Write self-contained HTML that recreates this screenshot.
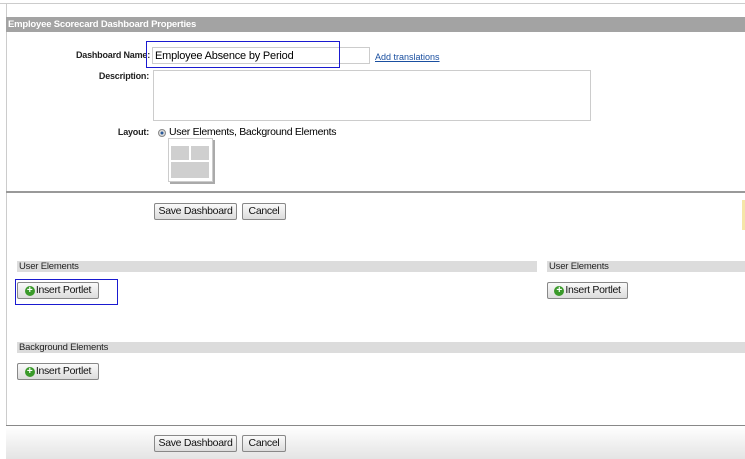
<!DOCTYPE html>
<html><head><style>
*{margin:0;padding:0;box-sizing:border-box}
body{width:745px;height:459px;background:#fff;font-family:"Liberation Sans",Arial,sans-serif;font-size:11px;color:#000;position:relative;overflow:hidden}
.a{position:absolute;white-space:nowrap}
.btn{position:absolute;height:17px;border:1px solid #888;border-radius:2px;background:linear-gradient(#fafafa,#dcdcdc);font-size:10.5px;letter-spacing:-0.3px;line-height:15px;text-align:center;color:#111;white-space:nowrap;display:flex;align-items:center;justify-content:center}
.bar{position:absolute;height:11px;background:#dcdcdc;font-size:9.5px;letter-spacing:-0.2px;line-height:11px;padding-left:2px;color:#222;white-space:nowrap}
.lbl{position:absolute;font-weight:bold;font-size:9px;text-align:right;color:#222;white-space:nowrap;letter-spacing:-0.2px}
.ic{display:inline-block;width:10px;height:10px;border-radius:50%;background:#3a9a2a;color:#fff;font-size:10px;line-height:10px;font-weight:bold;text-align:center;margin-right:1px;letter-spacing:0}
</style></head><body>
<div class="a" style="left:0;top:3px;width:745px;height:1px;background:#ccc"></div>
<div class="a" style="left:6px;top:3px;width:1px;height:456px;background:#ccc"></div>
<div class="a" style="left:6px;top:17px;width:739px;height:15px;background:#a3a3a3;color:#fff;font-weight:bold;font-size:9.5px;line-height:15px;padding-left:2px;letter-spacing:-0.2px">Employee Scorecard Dashboard Properties</div>
<div class="lbl" style="left:40px;top:50px;width:110px">Dashboard Name:</div>
<div class="a" style="left:152px;top:47px;width:218px;height:17px;border:1px solid #ccc"></div>
<div class="a" style="left:155px;top:50px;font-size:11px;letter-spacing:-0.2px">Employee Absence by Period</div>
<div class="a" style="left:146px;top:41px;width:194px;height:27px;border:1px solid #1a1ad0"></div>
<div class="a" style="left:375px;top:52px;font-size:9px;color:#1a4fa0;text-decoration:underline">Add translations</div>
<div class="lbl" style="left:40px;top:71px;width:109px">Description:</div>
<div class="a" style="left:153px;top:70px;width:438px;height:51px;border:1px solid #ccc"></div>
<div class="lbl" style="left:40px;top:127px;width:109px">Layout:</div>
<div class="a" style="left:158px;top:129px;width:8px;height:8px;border-radius:50%;border:1px solid #888;background:radial-gradient(#2a5a9a 30%,#ddd 40%)"></div>
<div class="a" style="left:169px;top:126px;font-size:10.5px;letter-spacing:-0.3px">User Elements, Background Elements</div>
<div class="a" style="left:168px;top:138px;width:45px;height:44px;border:1px solid #ccc;box-shadow:2px 2px 0 #aaa;background:#fff"></div>
<div class="a" style="left:171px;top:146px;width:18px;height:14px;background:#cfcfcf"></div>
<div class="a" style="left:191px;top:146px;width:18px;height:14px;background:#cfcfcf"></div>
<div class="a" style="left:171px;top:162px;width:38px;height:16px;background:#cfcfcf"></div>
<div class="a" style="left:6px;top:191px;width:739px;height:2px;background:#999"></div>
<div class="btn" style="left:154px;top:203px;width:83px">Save Dashboard</div>
<div class="btn" style="left:242px;top:203px;width:44px">Cancel</div>
<div class="a" style="left:742px;top:200px;width:3px;height:30px;background:#f5e6a8"></div>
<div class="bar" style="left:17px;top:261px;width:520px">User Elements</div>
<div class="bar" style="left:547px;top:261px;width:198px">User Elements</div>
<div class="btn" style="left:17px;top:282px;width:82px"><span class="ic">+</span>Insert Portlet</div>
<div class="a" style="left:15px;top:279px;width:103px;height:26px;border:1px solid #1a1ad0"></div>
<div class="btn" style="left:547px;top:282px;width:81px"><span class="ic">+</span>Insert Portlet</div>
<div class="bar" style="left:17px;top:342px;width:728px">Background Elements</div>
<div class="btn" style="left:17px;top:363px;width:82px"><span class="ic">+</span>Insert Portlet</div>
<div class="a" style="left:6px;top:425px;width:739px;height:34px;background:linear-gradient(#fff,#e4e4e4);border-top:1px solid #888"></div>
<div class="btn" style="left:154px;top:435px;width:83px">Save Dashboard</div>
<div class="btn" style="left:242px;top:435px;width:44px">Cancel</div>
</body></html>
